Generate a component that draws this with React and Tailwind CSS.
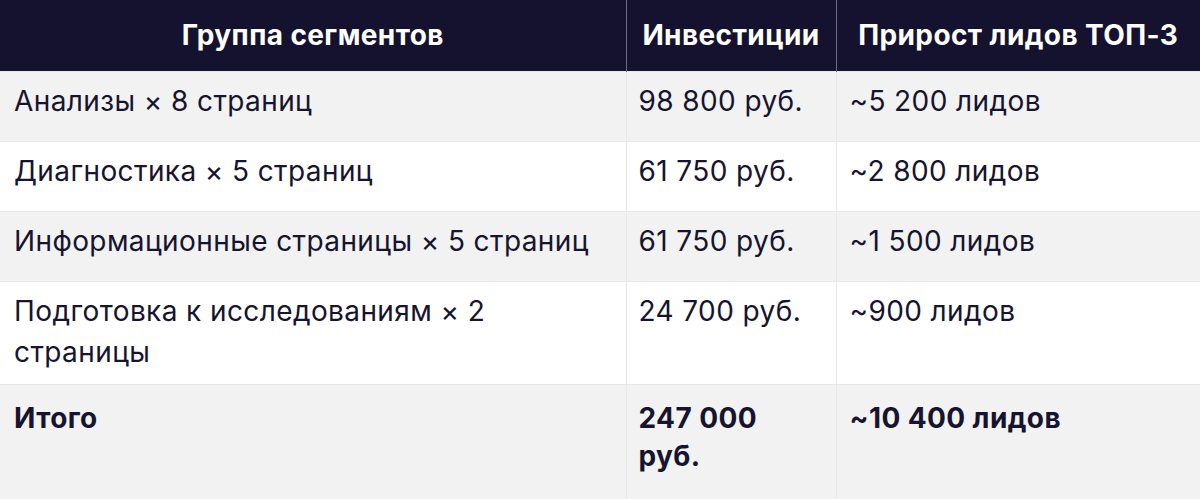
const rows = [
  { name: 'Анализы × 8 страниц', cost: '98 800 руб.', leads: '~5 200 лидов' },
  { name: 'Диагностика × 5 страниц', cost: '61 750 руб.', leads: '~2 800 лидов' },
  { name: 'Информационные страницы × 5 страниц', cost: '61 750 руб.', leads: '~1 500 лидов' },
  { name: 'Подготовка к исследованиям × 2 страницы', cost: '24 700 руб.', leads: '~900 лидов' },
];

export default function App() {
  return (
    <div className="w-[1200px] h-[499px] overflow-hidden bg-white text-[#16142e] font-['Inter',sans-serif] tracking-[0.4px]">
      <table className="w-full table-fixed border-collapse text-[28px]">
        <colgroup>
          <col className="w-[626px]" />
          <col className="w-[210px]" />
          <col className="w-[364px]" />
        </colgroup>
        <thead>
          <tr className="bg-[#15122f] text-white h-[71px]">
            <th className="font-bold text-center align-middle border-r border-[#6d6b8a]">Группа сегментов</th>
            <th className="font-bold text-center align-middle border-r border-[#6d6b8a]">Инвестиции</th>
            <th className="font-bold text-center align-middle">Прирост лидов ТОП-3</th>
          </tr>
        </thead>
        <tbody>
          {rows.map((r, i) => (
            <tr key={r.name} className={`h-[70px] ${i % 2 === 0 ? 'bg-[#f2f2f2]' : 'bg-white'}`}>
              <td className="align-top px-[14px] pt-[9px] pb-[11px] leading-[41px] border border-[#e8e8e8] border-l-0">{r.name}</td>
              <td className="align-top px-[12px] pt-[9px] pb-[11px] leading-[41px] border border-[#e8e8e8]">{r.cost}</td>
              <td className="align-top px-[13px] pt-[9px] pb-[11px] leading-[41px] border border-[#e8e8e8] border-r-0">{r.leads}</td>
            </tr>
          ))}
          <tr className="bg-[#f2f2f2] font-bold">
            <td className="align-top px-[14px] pt-[14px] pb-[30px] leading-[38px] border border-[#e8e8e8] border-l-0">Итого</td>
            <td className="align-top px-[12px] pt-[14px] pb-[30px] leading-[38px] border border-[#e8e8e8]">247 000 руб.</td>
            <td className="align-top px-[13px] pt-[14px] pb-[30px] leading-[38px] border border-[#e8e8e8] border-r-0">~10 400 лидов</td>
          </tr>
        </tbody>
      </table>
    </div>
  );
}
